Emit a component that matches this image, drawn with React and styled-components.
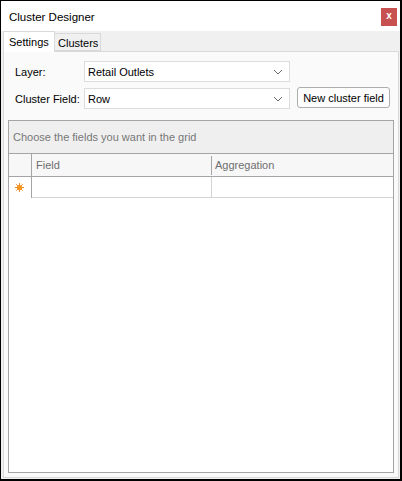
import React from 'react'
import styled, { createGlobalStyle } from 'styled-components';

const GlobalStyle = createGlobalStyle`
html, body {
  margin: 0;
  padding: 0;
  background: #ffffff;
}
* { box-sizing: border-box; }
`;

const ui = `"Liberation Sans", Arial, sans-serif`;

function Chevron() {
    return (
        <svg width="10" height="6" viewBox="0 0 10 6">
            <path d="M1 1 L5 5 L9 1" fill="none" stroke="#6a6a6a" strokeWidth="1" />
        </svg>
    )
}

function NewRowStar() {
    return (
        <svg width="9" height="9" viewBox="0 0 9 9">
            <g stroke="#f08a24" strokeWidth="1">
                <line x1="4.5" y1="0" x2="4.5" y2="9" />
                <line x1="0" y1="4.5" x2="9" y2="4.5" />
                <line x1="1.3" y1="1.3" x2="7.7" y2="7.7" />
                <line x1="7.7" y1="1.3" x2="1.3" y2="7.7" />
            </g>
            <circle cx="4.5" cy="4.5" r="2.6" fill="#f7941d" />
        </svg>
    )
}

function ComboBox({ value }) {
    return (
        <Combo>
            <ComboText>{value}</ComboText>
            <ComboArrow><Chevron /></ComboArrow>
        </Combo>
    )
}

function App() {
    return (
        <>
            <GlobalStyle />
            <Window>
                <TitleBar>
                    <Title>Cluster Designer</Title>
                    <CloseButton>x</CloseButton>
                </TitleBar>
                <Body>
                    <TabStrip>
                        <Tab active>Settings</Tab>
                        <Tab>Clusters</Tab>
                    </TabStrip>
                    <TabPage>
                        <Form>
                            <FormRow>
                                <Label>Layer:</Label>
                                <ComboBox value="Retail Outlets" />
                            </FormRow>
                            <FormRow>
                                <Label>Cluster Field:</Label>
                                <ComboBox value="Row" />
                                <Button>New cluster field</Button>
                            </FormRow>
                        </Form>
                        <Grid>
                            <GroupPanel>Choose the fields you want in the grid</GroupPanel>
                            <HeaderRow>
                                <Indicator header />
                                <HeaderCell>Field</HeaderCell>
                                <HeaderCell divider>Aggregation</HeaderCell>
                            </HeaderRow>
                            <DataRow>
                                <Indicator><NewRowStar /></Indicator>
                                <DataCell />
                                <DataCell divider />
                            </DataRow>
                            <GridEmpty />
                        </Grid>
                    </TabPage>
                </Body>
            </Window>
        </>
    )
}

export default App

const Window = styled.div`
width: 402px;
height: 481px;
display: flex;
flex-direction: column;
border-style: solid;
border-color: #000;
border-width: 1px 2px 2px 1px;
font-family: ${ui};
font-size: 11px;
color: #000;
`;
const TitleBar = styled.div`
height: 30px;
flex-shrink: 0;
background: #ffffff;
display: flex;
align-items: center;
justify-content: space-between;
padding: 1px 3px 0 8px;
`;
const Title = styled.div`
font-size: 11.5px;
color: #000;
`;
const CloseButton = styled.div`
width: 16px;
height: 18px;
background: #c75050;
color: #fff;
font-weight: bold;
font-size: 10px;
display: flex;
align-items: center;
justify-content: center;
line-height: 1;
padding-bottom: 1px;
`;
const Body = styled.div`
flex: 1;
display: flex;
flex-direction: column;
background: #f0f0f0;
padding: 0 1px 1px 2px;
min-height: 0;
`;
const TabStrip = styled.div`
height: 20px;
display: flex;
align-items: flex-end;
position: relative;
z-index: 1;
`;
const Tab = styled.div`
height: ${p => (p.active ? '21px' : '18px')};
margin-bottom: ${p => (p.active ? '-1px' : '0')};
padding: ${p => (p.active ? '0 0 1px 5px' : '1px 0 0 3px')};
width: ${p => (p.active ? '52px' : '46px')};
background: ${p => (p.active ? '#ffffff' : '#f0f0f0')};
border: 1px solid #d9d9d9;
border-bottom: ${p => (p.active ? 'none' : '1px solid #d9d9d9')};
border-left: ${p => (p.active ? '1px solid #d9d9d9' : 'none')};
display: flex;
align-items: center;
white-space: nowrap;
font-size: 11px;
color: #000;
`;
const TabPage = styled.div`
flex: 1;
min-height: 0;
background: #fafafa;
border: 1px solid #d9d9d9;
display: flex;
flex-direction: column;
padding: 0 4px 4px 4px;
`;
const Form = styled.div`
display: flex;
flex-direction: column;
gap: 6px;
padding: 9px 0 0 7px;
`;
const FormRow = styled.div`
display: flex;
align-items: center;
height: 21px;
`;
const Label = styled.div`
width: 69px;
white-space: nowrap;
font-size: 11px;
color: #000;
`;
const Combo = styled.div`
width: 206px;
height: 21px;
background: #ffffff;
border: 1px solid #dcdcdc;
display: flex;
align-items: center;
padding: 0 6px 0 3px;
`;
const ComboText = styled.div`
flex: 1;
font-size: 11px;
color: #000;
`;
const ComboArrow = styled.div`
display: flex;
align-items: center;
`;
const Button = styled.div`
margin-left: 7px;
width: 93px;
height: 21px;
margin-top: -2px;
background: #fdfdfd;
border: 1px solid #adadad;
border-radius: 3px;
display: flex;
align-items: center;
justify-content: center;
white-space: nowrap;
font-size: 11px;
color: #000;
`;
const Grid = styled.div`
margin-top: 11px;
flex: 1;
display: flex;
flex-direction: column;
border: 1px solid #a5a5a5;
background: #ffffff;
`;
const GroupPanel = styled.div`
height: 33px;
flex-shrink: 0;
background: #efefef;
border-bottom: 1px solid #a5a5a5;
display: flex;
align-items: center;
padding-left: 4px;
font-size: 11px;
color: #777;
`;
const HeaderRow = styled.div`
height: 23px;
flex-shrink: 0;
display: flex;
background: #f7f7f7;
border-bottom: 1px solid #a5a5a5;
`;
const Indicator = styled.div`
width: 23px;
flex-shrink: 0;
border-right: 1px solid #a5a5a5;
display: flex;
align-items: center;
justify-content: center;
padding-right: 2px;
`;
const HeaderCell = styled.div`
flex: ${p => (p.divider ? '1' : '0 0 179px')};
position: relative;
display: flex;
align-items: center;
padding-left: 4px;
font-size: 11px;
color: #6e6e6e;
&::before {
  content: '';
  display: ${p => (p.divider ? 'block' : 'none')};
  position: absolute;
  left: 0;
  top: 2px;
  bottom: 1px;
  width: 1px;
  background: #a5a5a5;
}
`;
const DataRow = styled.div`
height: 21px;
flex-shrink: 0;
display: flex;
`;
const DataCell = styled.div`
flex: ${p => (p.divider ? '1' : '0 0 179px')};
border-bottom: 1px solid #d4d4d4;
border-left: ${p => (p.divider ? '1px solid #d4d4d4' : 'none')};
`;
const GridEmpty = styled.div`
flex: 1;
`;
